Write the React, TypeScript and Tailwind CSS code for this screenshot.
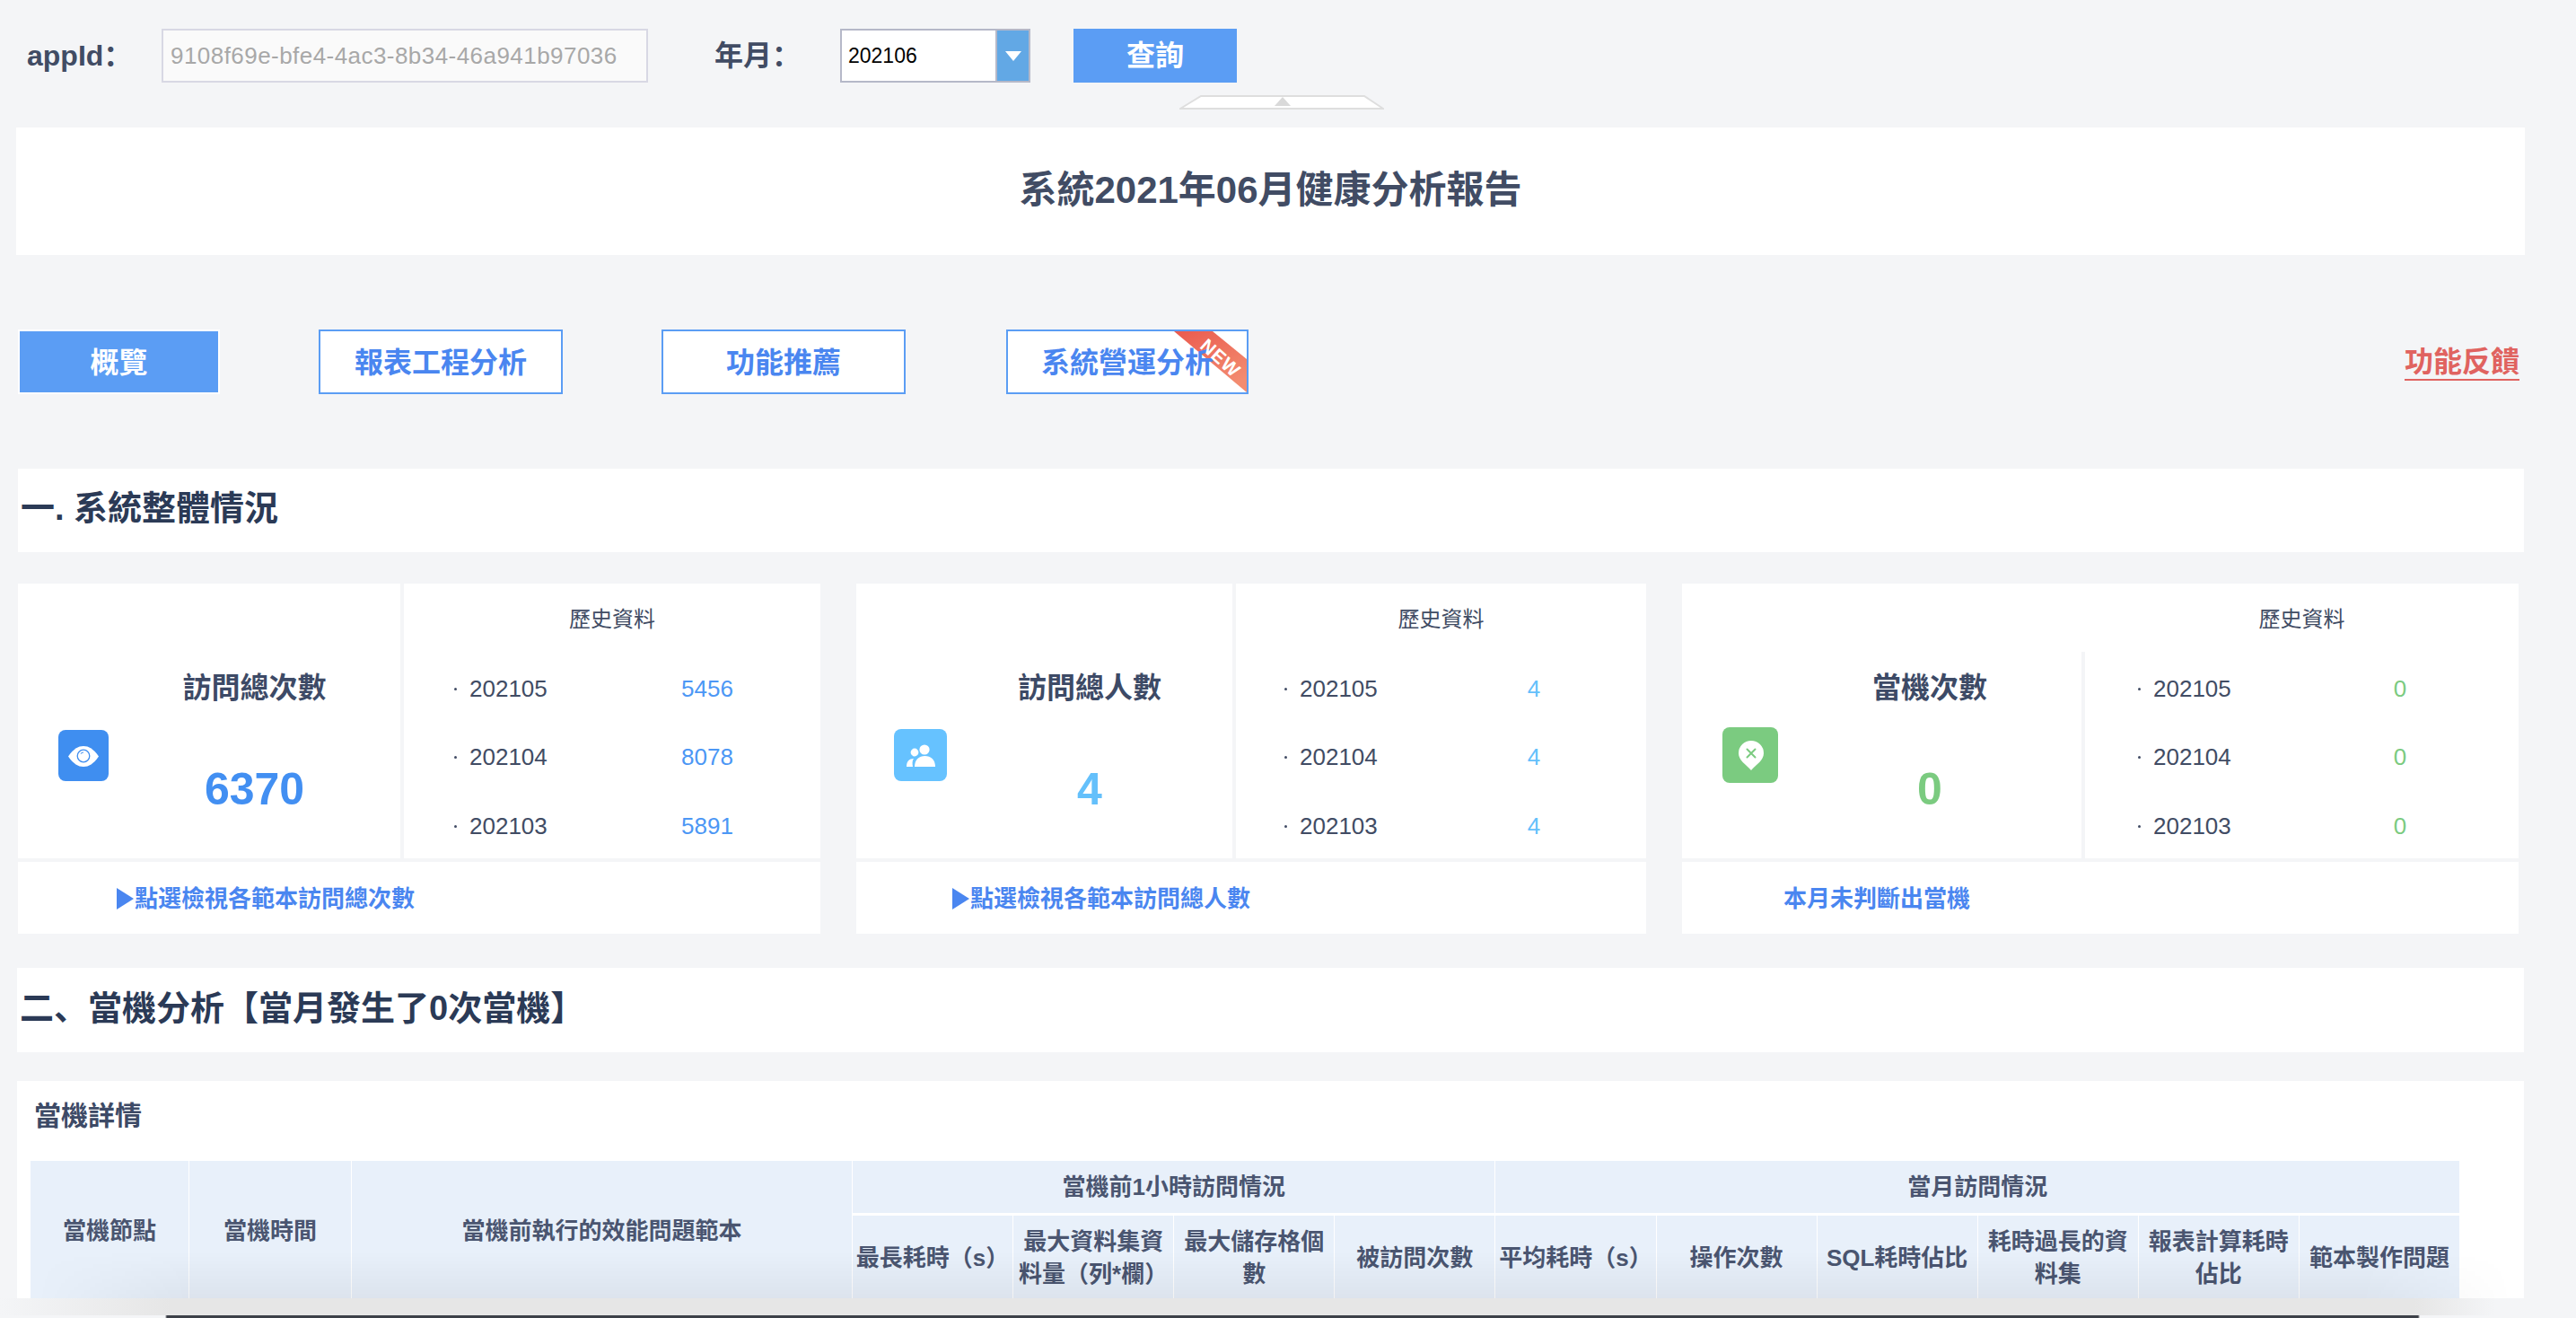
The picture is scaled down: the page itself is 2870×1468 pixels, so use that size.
const stats = [
  {
    title: "訪問總次數",
    value: "6370",
    wrap: "w-[894px]",
    pad: "pl-[45px]",
    leftW: "w-[426px]",
    dividerClass: "",
    numColor: "text-[#428ff2]",
    valColor: "text-[#4c97f5]",
    iconBox: "w-[56px] h-[57px] bg-[#3f8ef0] mt-[163px]",
    rowPad: "pl-[56px]",
    labelW: "w-[232px]",
    icon: "eye",
    rows: [["202105", "5456"], ["202104", "8078"], ["202103", "5891"]],
    arrow: true,
    link: "點選檢視各範本訪問總次數",
    linkPad: "pl-[110px]",
  },
  {
    title: "訪問總人數",
    value: "4",
    wrap: "w-[880px] ml-[40px]",
    pad: "pl-[42px]",
    leftW: "w-[419px]",
    dividerClass: "",
    numColor: "text-[#64c0fb]",
    valColor: "text-[#64c0fb]",
    iconBox: "w-[59px] h-[58px] bg-[#66c2ff] mt-[162px]",
    rowPad: "pl-[54px]",
    labelW: "w-[228px]",
    icon: "users",
    rows: [["202105", "4"], ["202104", "4"], ["202103", "4"]],
    arrow: true,
    link: "點選檢視各範本訪問總人數",
    linkPad: "pl-[107px]",
  },
  {
    title: "當機次數",
    value: "0",
    wrap: "w-[932px] ml-[40px]",
    pad: "pl-[45px]",
    leftW: "w-[445px]",
    dividerClass: "mt-[76px]",
    numColor: "text-[#7bcb80]",
    valColor: "text-[#7bcb80]",
    iconBox: "w-[62px] h-[62px] bg-[#7bcb80] mt-[160px]",
    rowPad: "pl-[59px]",
    labelW: "w-[242px]",
    icon: "pin",
    rows: [["202105", "0"], ["202104", "0"], ["202103", "0"]],
    arrow: false,
    link: "本月未判斷出當機",
    linkPad: "pl-[113px]",
  },
];

const subCols = [
  "最長耗時\uFF08s\uFF09",
  "最大資料集資料量\uFF08列*欄\uFF09",
  "最大儲存格個數",
  "被訪問次數",
  "平均耗時\uFF08s\uFF09",
  "操作次數",
  "SQL耗時佔比",
  "耗時過長的資料集",
  "報表計算耗時佔比",
  "範本製作問題",
];

function StatIcon({ name }: { name: string }) {
  if (name === "eye") {
    return (
      <svg viewBox="0 0 56 57" className="w-full h-full">
        <path d="M11 29.5C17 21 22 18 28 18C34 18 39 21 45 29.5C39 38 34 41 28 41C22 41 17 38 11 29.5Z" fill="#fff" />
        <circle cx="28" cy="29" r="6.8" fill="none" stroke="#3f8ef0" strokeWidth="1.3" />
        <path d="M25 26.5A4 4 0 0 1 28 25" fill="none" stroke="#3f8ef0" strokeWidth="1.2" />
      </svg>
    );
  }
  if (name === "users") {
    return (
      <svg viewBox="0 0 59 58" className="w-full h-full" fill="#fff">
        <circle cx="34" cy="23" r="5.6" />
        <circle cx="23" cy="26" r="4.4" />
        <path d="M23 42C23 34 28 30 34.5 30C41 30 46 34 46 42Z" />
        <path d="M14 42C14 36 17 33 22 33C20 35.5 20.5 39 21 42Z" />
      </svg>
    );
  }
  return (
    <svg viewBox="0 0 62 62" className="w-full h-full">
      <path d="M32 48C26 41 18 37 18 29A14 14 0 0 1 46 29C46 37 38 41 32 48Z" fill="#fff" />
      <path d="M27.5 24.5L36.5 33.5M36.5 24.5L27.5 33.5" stroke="#7bcb80" strokeWidth="2" strokeLinecap="round" />
    </svg>
  );
}

function StatCard({ s }: { s: (typeof stats)[number] }) {
  return (
    <div className={s.wrap}>
      <div className="flex h-[306px] bg-white">
        <div className={"flex shrink-0 " + s.pad + " " + s.leftW}>
          <div className={"shrink-0 rounded-[8px] " + s.iconBox}>
            <StatIcon name={s.icon} />
          </div>
          <div className="flex-1 flex flex-col items-center pt-[94px]">
            <p className="text-[32px] leading-[44px] font-bold text-[#3d4a66]">{s.title}</p>
            <p className={"text-[50px] leading-[60px] font-bold mt-[61px] " + s.numColor}>{s.value}</p>
          </div>
        </div>
        <div className={"w-[4px] shrink-0 bg-[#f4f5f7] " + s.dividerClass}></div>
        <div className="flex-1">
          <div className="h-[79px] flex items-center justify-center text-[24px] text-[#414c64]">歷史資料</div>
          {s.rows.map((r) => (
            <div key={r[0]} className={"flex items-center h-[76px] last:mt-[1px] text-[26px] " + s.rowPad}>
              <div className={"flex items-center text-[#414c64] " + s.labelW}>
                <span className="w-[3px] h-[3px] rounded-full bg-[#414c64] mr-[14px]"></span>
                {r[0]}
              </div>
              <span className={"w-[100px] text-center " + s.valColor}>{r[1]}</span>
            </div>
          ))}
        </div>
      </div>
      <div className={"flex items-center h-[80px] mt-[4px] pt-[2px] bg-white text-[26px] font-bold text-[#4a86f0] " + s.linkPad}>
        {s.arrow && (
          <svg viewBox="0 0 19 24" className="w-[19px] h-[24px] shrink-0 mr-[1px]">
            <path d="M0 0L19 12L0 24Z" fill="#4a86f0" />
          </svg>
        )}
        {s.link}
      </div>
    </div>
  );
}

function SectionBar({ children, className }: { children: string; className: string }) {
  return (
    <div className={"flex items-center h-[93px] pl-[3px] pb-[4px] bg-white text-[38px] font-bold text-[#2b3a56] " + className}>
      {children}
    </div>
  );
}

export default function App() {
  const th = "border border-white bg-[#e8f0fa] text-[26px] leading-[36px] font-bold text-[#4a5570] text-center align-middle px-[3px]";
  return (
    <div className="relative flex flex-col w-[2870px] h-[1468px] overflow-hidden bg-[#f4f5f7] font-[Liberation_Sans,Noto_Sans_CJK_SC,sans-serif]">
      <div className="h-[1446px] shrink-0 overflow-hidden">
        {/* query bar */}
        <div className="flex items-center h-[60px] mt-[32px] pl-[30px]">
          <span className="w-[150px] text-[32px] font-bold text-[#414c64]">{"appId\uFF1A"}</span>
          <div className="flex items-center w-[542px] h-[60px] pl-[8px] border-2 border-[#d8d8e4] bg-[#fafafa] text-[26px] tracking-[0.45px] text-[#a8a8a8]">
            9108f69e-bfe4-4ac3-8b34-46a941b97036
          </div>
          <span className="ml-[74px] w-[140px] text-[32px] font-bold text-[#414c64]">{"年月\uFF1A"}</span>
          <div className="flex w-[212px] h-[60px] border-2 border-[#b5b8c8] bg-white">
            <span className="flex-1 flex items-center pl-[7px] text-[23px] text-black">202106</span>
            <span className="flex items-center justify-center w-[37px] bg-[#62a8e5] border-l-2 border-[#b5b8c8]">
              <svg viewBox="0 0 18 11" className="w-[18px] h-[11px]">
                <path d="M0 0H18L9 11Z" fill="#fff" />
              </svg>
            </span>
          </div>
          <button className="ml-[48px] w-[182px] h-[60px] bg-[#5b9df4] text-[32px] font-bold text-white">查詢</button>
        </div>

        <svg viewBox="0 0 228 16" className="block w-[228px] h-[16px] mt-[14px] ml-[1314px]">
          <path d="M1 15L24 1H206L227 15Z" fill="#fff" stroke="#dedede" strokeWidth="2" />
          <path d="M106 12L115 2L124 12Z" fill="#d9d9d9" />
        </svg>

        <div className="flex items-center justify-center ml-[18px] w-[2795px] h-[142px] mt-[20px] pb-[4px] bg-white text-[42px] font-bold text-[#414c64]">
          系統2021年06月健康分析報告
        </div>

        {/* tabs */}
        <div className="flex items-center h-[72px] mt-[83px] pl-[20px] text-[32px] font-bold">
          <div className="flex items-center justify-center w-[225px] h-[72px] pt-[2px] border-2 border-white bg-[#5b9df4] text-white">概覽</div>
          <div className="flex items-center justify-center ml-[110px] w-[272px] h-[72px] pt-[2px] border-2 border-[#5b9df4] bg-white text-[#4a86f0]">報表工程分析</div>
          <div className="flex items-center justify-center ml-[110px] w-[272px] h-[72px] pt-[2px] border-2 border-[#5b9df4] bg-white text-[#4a86f0]">功能推薦</div>
          <div className="relative flex items-center justify-center ml-[112px] w-[270px] h-[72px] pt-[2px] border-2 border-[#5b9df4] bg-white text-[#4a86f0]">
            <svg viewBox="0 0 81 68" className="absolute right-0 top-0 w-[81px] h-[68px]">
              <defs>
                <linearGradient id="ribbon" x1="0" y1="0" x2="0.6" y2="1">
                  <stop offset="0" stopColor="#ea5a4e" />
                  <stop offset="1" stopColor="#f38c70" />
                </linearGradient>
              </defs>
              <path d="M0 0H43L81 31V68Z" fill="url(#ribbon)" />
            </svg>
            <span className="relative">系統營運分析</span>
            <span className="absolute right-[3px] top-[19px] rotate-[42deg] text-[21px] leading-none font-bold tracking-[1px] text-white">NEW</span>
          </div>
          <span className="ml-auto mr-[63px] mt-[2px] text-[32px] leading-[38px] font-bold border-b-2 border-[#e06360] text-[#e06360]">功能反饋</span>
        </div>

        <SectionBar className="ml-[20px] w-[2792px] mt-[83px]">一. 系統整體情況</SectionBar>

        <div className="flex mt-[35px] pl-[20px]">
          {stats.map((s) => (
            <StatCard key={s.title} s={s} />
          ))}
        </div>

        <SectionBar className="ml-[19px] w-[2793px] mt-[38px] h-[94px]">二、當機分析【當月發生了0次當機】</SectionBar>

        {/* crash details */}
        <div className="ml-[19px] w-[2793px] h-[300px] mt-[32px] bg-white">
          <div className="h-[88px] pt-[23px] pl-[19px] text-[30px] leading-[32px] font-bold text-[#3d4a66]">當機詳情</div>
          <table className="ml-[14px] w-[2707px] table-fixed border-collapse">
            <colgroup>
              <col className="w-[177px]" />
              <col className="w-[181px]" />
              <col className="w-[558px]" />
              {subCols.map((c) => (
                <col key={c} className="w-[179.1px]" />
              ))}
            </colgroup>
            <thead>
              <tr className="h-[60px]">
                <th rowSpan={2} className={th}>當機節點</th>
                <th rowSpan={2} className={th}>當機時間</th>
                <th rowSpan={2} className={th}>當機前執行的效能問題範本</th>
                <th colSpan={4} className={th + " !border-b-[3px]"}>當機前1小時訪問情況</th>
                <th colSpan={6} className={th + " !border-b-[3px]"}>當月訪問情況</th>
              </tr>
              <tr className="h-[96px]">
                {subCols.map((c) => (
                  <th key={c} className={th}>{c}</th>
                ))}
              </tr>
            </thead>
          </table>
        </div>
      </div>

      {/* window edge at the bottom of the capture */}
      <div className="pointer-events-none absolute left-[40px] right-[70px] bottom-[22px] h-[52px] bg-gradient-to-b from-transparent to-black/5 [mask-image:linear-gradient(to_right,transparent,black_170px,black_calc(100%-170px),transparent)]"></div>
      <div className="h-[19px] shrink-0 bg-[linear-gradient(to_right,#f4f5f7_0px,#e6e6e6_190px,#e6e6e6_2690px,#f4f5f7_2780px)]"></div>
      <div className="h-[3px] shrink-0 bg-[linear-gradient(to_right,#f4f5f7_184px,#3c4048_186px,#3c4048_2694px,#f4f5f7_2696px)]"></div>
    </div>
  );
}
